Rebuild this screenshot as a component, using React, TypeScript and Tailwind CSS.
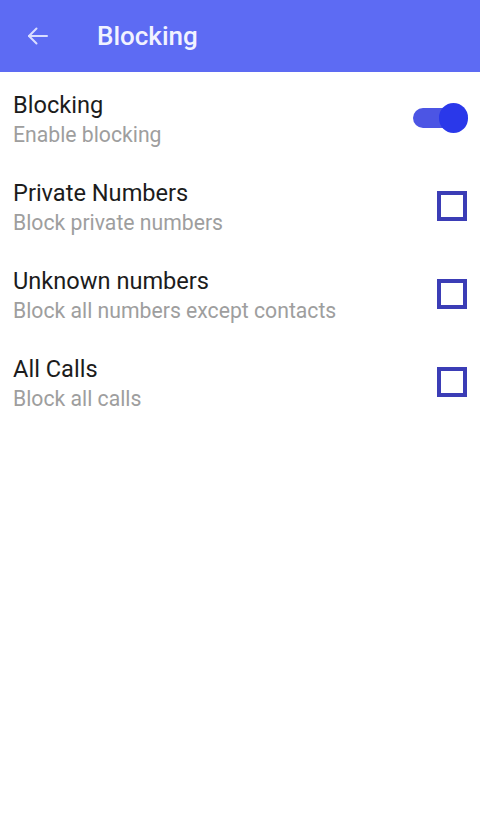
import React from "react";

const font = { fontFamily: "Roboto, 'Noto Sans', sans-serif" };

function Row({ title, sub, control }: { title: string; sub: string; control: React.ReactNode }) {
  return (
    <div className="flex h-[88px] items-center justify-between pl-[13px] pr-[12px]">
      <div className="flex flex-col self-start pt-[19px]">
        <div className="text-[23.6px] leading-[28px] text-[#1c1c1c]">{title}</div>
        <div className="text-[21.2px] leading-[32px] text-[#9e9e9e]">{sub}</div>
      </div>
      <div className="mt-[4px] flex items-center">{control}</div>
    </div>
  );
}

function Toggle() {
  return (
    <div className="relative h-[30px] w-[55px]">
      <div className="absolute left-0 top-[5px] h-[20px] w-[46px] rounded-full bg-[#4c55e4]" />
      <div className="absolute right-0 top-0 h-[30px] w-[29px] rounded-full bg-[#2a38ea]" />
    </div>
  );
}

function Check() {
  return <div className="mr-[1px] h-[30px] w-[30px] border-[4px] border-[#3b3db6] bg-white" />;
}

export default function App() {
  return (
    <div className="h-[821px] w-[480px] bg-white" style={font}>
      <div className="flex h-[72px] items-center bg-[#5d6bf3]">
        <svg className="ml-[26px]" width="24" height="24" viewBox="0 0 24 24" fill="none" stroke="#d9ddff" strokeWidth="2" strokeLinecap="round" strokeLinejoin="round">
          <path d="M21 12H3" />
          <path d="M10.5 4.5L3 12l7.5 7.5" />
        </svg>
        <div className="ml-[47px] text-[26px] font-medium leading-none text-[#f1f2ff]">Blocking</div>
      </div>
      <Row title="Blocking" sub="Enable blocking" control={<Toggle />} />
      <Row title="Private Numbers" sub="Block private numbers" control={<Check />} />
      <Row title="Unknown numbers" sub="Block all numbers except contacts" control={<Check />} />
      <Row title="All Calls" sub="Block all calls" control={<Check />} />
    </div>
  );
}
